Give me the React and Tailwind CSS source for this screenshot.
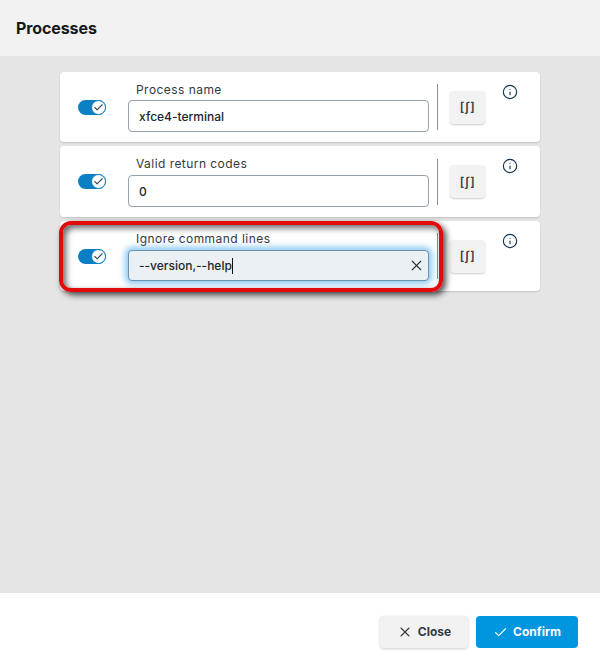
import React from 'react';
import { Check, Info, X } from 'lucide-react';

const font = { fontFamily: 'Inter, "Noto Sans", sans-serif' };

const Toggle = () => (
    <div className="flex h-[15px] w-[28px] shrink-0 items-center justify-end rounded-full bg-[#0a7fc4]">
        <div className="flex h-[15px] w-[15px] items-center justify-center rounded-full border border-[#0a7fc4] bg-white">
            <Check size={11} strokeWidth={2.4} className="text-[#3a4a58]" />
        </div>
    </div>
);

const Row = ({ label, value, focused, labelTop, gap, height }) => (
    <div className={`relative flex w-[480px] rounded-[4px] bg-white pl-[18px] shadow-[0_1px_2px_rgba(0,0,0,0.15)] ${height}`}>
        <div className="flex items-center">
            <Toggle />
        </div>
        <div className={`ml-[22px] w-[301px] ${labelTop}`}>
            <div className="pl-[8px] text-[12px] leading-[16px] tracking-[0.45px] text-[#33393f]">{label}</div>
            {focused ? (
                <div className={`${gap} flex h-[31px] items-center justify-between rounded-[4px] border border-[#6b93ad] bg-[#ebf0f4] pl-[10px] pr-[3px] shadow-[0_0_6px_3px_rgba(90,180,235,0.7)]`}>
                    <span className="border-r border-[#111] text-[12px] font-medium leading-[16px] text-[#20262b]">{value}</span>
                    <X size={17} strokeWidth={1.6} className="text-[#2c3238]" />
                </div>
            ) : (
                <div className={`${gap} flex h-[32px] items-center rounded-[4px] border border-[#94a3ad] bg-white pl-[10px] pt-[1px]`}>
                    <span className="text-[12px] font-medium leading-[16px] text-[#20262b]">{value}</span>
                </div>
            )}
        </div>
        <div className="ml-[8px] flex items-center">
            <div className="h-[46px] w-px bg-[#8a8f94]" />
        </div>
        <div className="ml-[12px] flex items-center">
            <div className="flex h-[33px] w-[35px] items-center justify-center rounded-[4px] bg-[#f2f2f2] text-[12px] font-semibold tracking-[0.5px] text-[#3a3f44] shadow-[0_1px_2px_rgba(0,0,0,0.2)]">[ʃ]</div>
        </div>
        <div className="ml-[17px] pt-[12px]">
            <Info size={16} strokeWidth={1.7} className="text-[#0f3550]" />
        </div>
        {focused && (
            <div className="absolute left-[-1px] top-0 h-[71px] w-[384px] rounded-[12px] border-4 border-[#e20a0a] shadow-[3px_3px_6px_rgba(0,0,0,0.7),inset_3px_3px_6px_rgba(0,0,0,0.6)]" />
        )}
    </div>
);

const App = () => {
    return (
        <div className="flex h-[671px] w-[600px] flex-col overflow-hidden bg-white" style={font}>
            <div className="flex h-[56px] shrink-0 items-center bg-[#f2f2f2] pl-[16px] text-[16px] font-bold tracking-[-0.1px] text-[#16191c]">Processes</div>
            <div className="flex flex-1 flex-col items-center gap-[4px] bg-[#e5e5e5] pt-[16px]">
                <Row label="Process name" value="xfce4-terminal" labelTop="pt-[10px]" gap="mt-[2px]" height="h-[70px]" />
                <Row label="Valid return codes" value="0" labelTop="pt-[10px]" gap="mt-[3px]" height="h-[71px]" />
                <Row label="Ignore command lines" value="--version,--help" focused labelTop="pt-[10px]" gap="mt-[3px]" height="h-[70px]" />
            </div>
            <div className="flex h-[78px] shrink-0 items-start justify-end gap-[8px] bg-white pr-[22px] pt-[23px]">
                <button className="flex h-[32px] w-[88px] items-center justify-center gap-[5px] rounded-[4px] bg-[#f2f2f2] text-[12px] font-bold text-[#33393f] shadow-[0_1px_3px_rgba(0,0,0,0.2)]">
                    <X size={16} strokeWidth={1.6} />
                    Close
                </button>
                <button className="flex h-[32px] w-[102px] items-center justify-center gap-[5px] rounded-[4px] bg-[#0095df] text-[12px] font-bold text-white">
                    <Check size={15} strokeWidth={1.8} />
                    Confirm
                </button>
            </div>
        </div>
    );
};

export default App;
